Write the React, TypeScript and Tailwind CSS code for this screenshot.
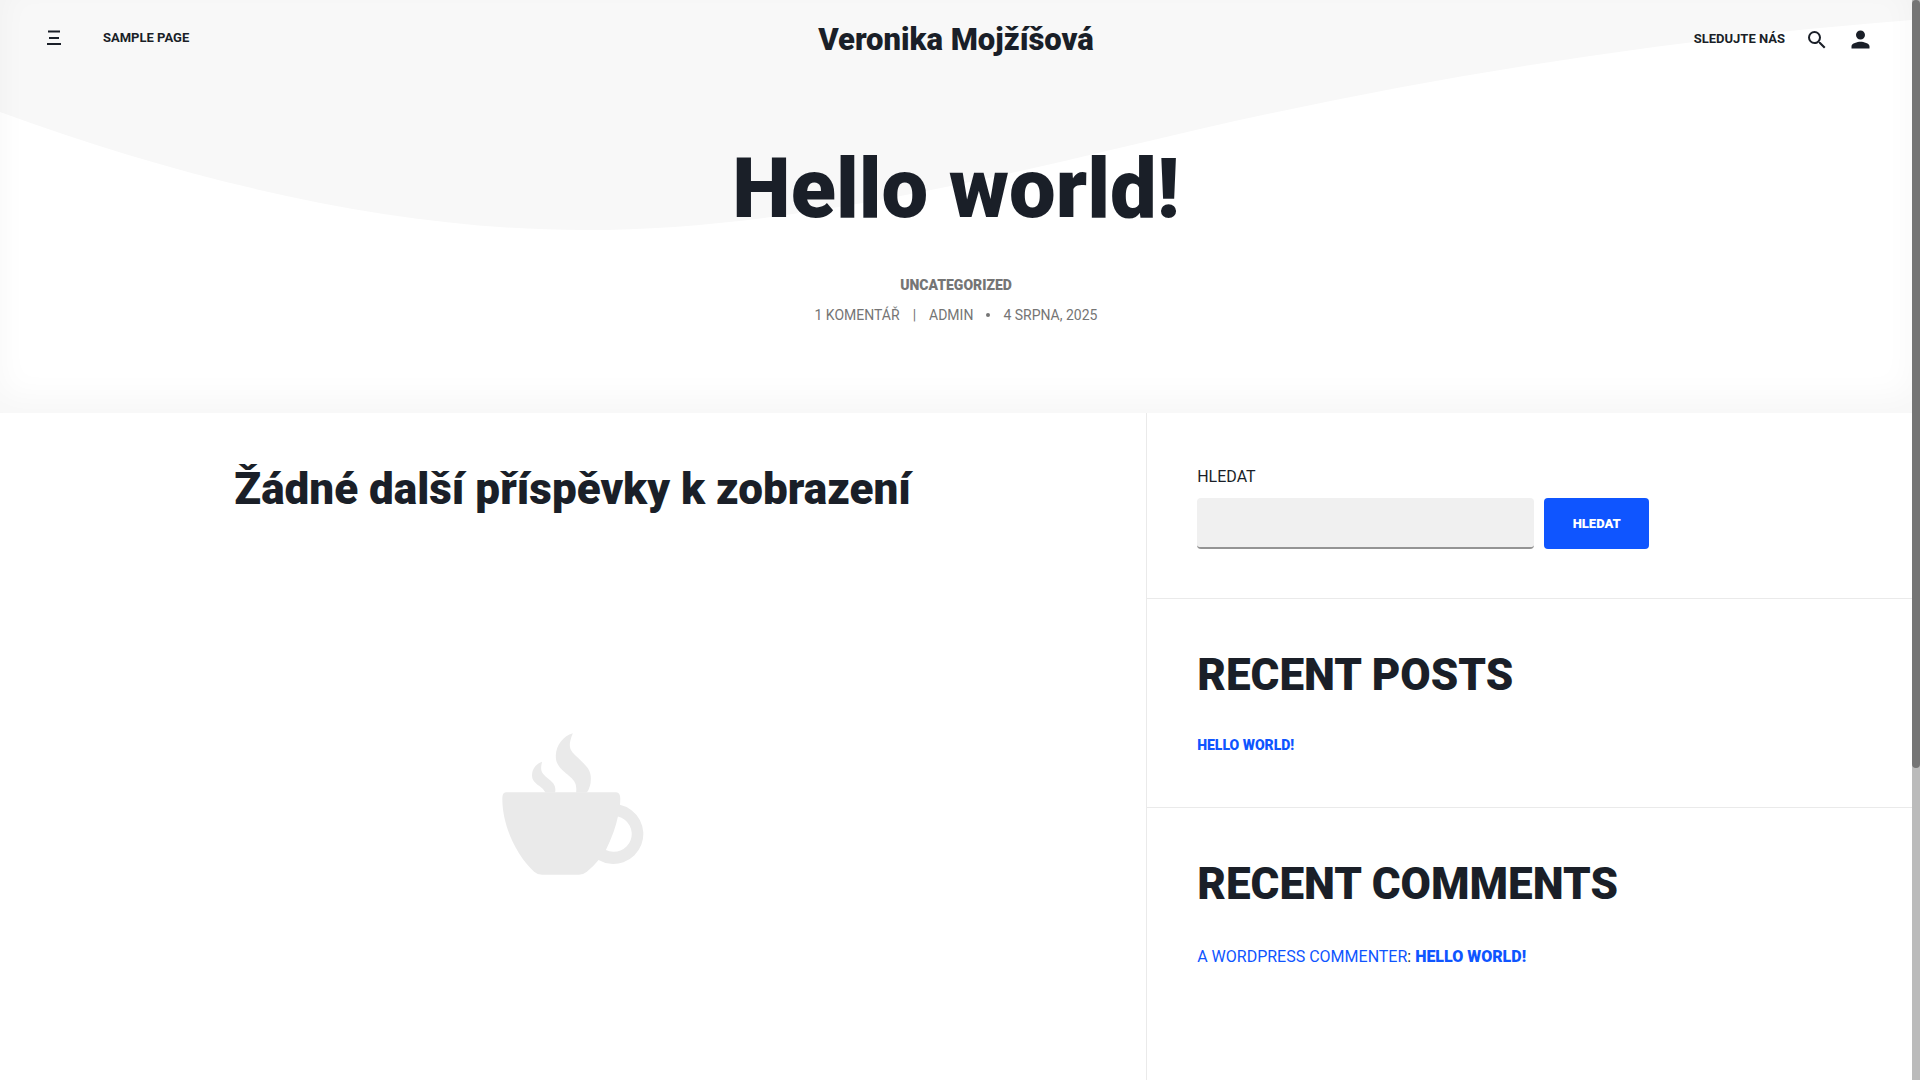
import { useState } from 'react';

interface Entry {
  id: number;
  title: string;
  author?: string;
}

const recentPosts: Entry[] = [{ id: 1, title: 'Hello world!' }];

const recentComments: Entry[] = [
  { id: 1, title: 'Hello world!', author: 'A WordPress Commenter' },
];

function MenuIcon() {
  return (
    <svg width="14" height="15" viewBox="0 0 14 15" fill="currentColor" aria-hidden="true">
      <rect x="1" y="0.5" width="12" height="2" />
      <rect x="2" y="7" width="10" height="2" />
      <rect x="0" y="13" width="14" height="2" />
    </svg>
  );
}

function SearchIcon() {
  return (
    <svg width="24" height="24" viewBox="0 0 24 24" fill="currentColor" aria-hidden="true">
      <path d="M15.5 14h-.79l-.28-.27A6.471 6.471 0 0 0 16 9.5 6.5 6.5 0 1 0 9.5 16c1.61 0 3.09-.59 4.23-1.57l.27.28v.79l5 4.99L20.49 19l-4.99-5zm-6 0C7.01 14 5 11.99 5 9.5S7.01 5 9.5 5 14 7.01 14 9.5 11.99 14 9.5 14z" />
    </svg>
  );
}

function UserIcon() {
  return (
    <svg width="27" height="27" viewBox="0 0 24 24" fill="currentColor" aria-hidden="true">
      <path d="M12 12c2.21 0 4-1.79 4-4s-1.79-4-4-4-4 1.79-4 4 1.79 4 4 4zm0 2c-2.67 0-8 1.34-8 4v2h16v-2c0-2.66-5.33-4-8-4z" />
    </svg>
  );
}

function CupIcon() {
  return (
    <svg width="142" height="142" viewBox="66 69 425 425" fill="#eaeaea" aria-hidden="true">
      <path
        fillRule="evenodd"
        d="M78 246H408Q420 246 420 266Q420 275 419 284A89.5 89.5 0 1 1 355 449Q340 468 320 484Q309 493 296 493H186Q172 493 162 484C105 432 66 340 67 264Q67 246 78 246ZM413 319Q404 364 377 419A53.5 53.5 0 1 0 413 319Z"
      />
      <path d="M278 70C262 110 268 120 290 140C320 168 332 180 332 205Q332 230 320 247H288C290 220 285 212 262 193C236 172 227 160 227 137C228 105 250 78 278 70Z" />
      <path d="M186 155C180 180 183 188 200 202C222 218 228 228 225 247H196Q192 238 178 228C160 214 155 206 156 193C157 175 170 160 186 155Z" />
    </svg>
  );
}

function Wave() {
  return (
    <svg
      className="absolute inset-0 w-full h-full"
      viewBox="0 0 1912 413"
      preserveAspectRatio="none"
      aria-hidden="true"
    >
      <path
        d="M0 0H1912V20C1680 38 1440 74 1200 129C1000 176 790 230 585 230C400 230 200 185 0 112Z"
        fill="#f8f8f8"
      />
    </svg>
  );
}

export default function App() {
  const [search, setSearch] = useState('');

  return (
    <div className="flex min-h-screen bg-white text-[#1a1f28] font-[Roboto,sans-serif]">
      <div className="flex-1 flex flex-col">
        <header className="relative h-[413px]">
          <Wave />
          <div className="absolute inset-0 shadow-[inset_0_-16px_32px_rgba(0,0,0,0.035)]"></div>
          <div className="relative">
            <div className="grid grid-cols-3 items-center h-[78px] px-10">
              <nav className="flex items-center gap-9 pl-[7px] pb-0.5">
                <button type="button" aria-label="Menu" className="pr-1.5 pb-0.5">
                  <MenuIcon />
                </button>
                <a href="#sample" className="text-[13px] font-bold uppercase">Sample Page</a>
              </nav>
              <a href="#home" className="pt-px text-center text-[31px] leading-[40px] font-black whitespace-nowrap">
                Veronika Mojžíšová
              </a>
              <div className="flex items-center justify-end">
                <a href="#social" className="text-[13px] font-bold uppercase mr-5">Sledujte nás</a>
                <button type="button" aria-label="Hledat" className="mr-[18px] mt-0.5">
                  <SearchIcon />
                </button>
                <button type="button" aria-label="Admin" className="mr-[-2px]">
                  <UserIcon />
                </button>
              </div>
            </div>
            <div className="pt-[61px] text-center">
              <h1 className="text-[83px] leading-[100px] font-black">Hello world!</h1>
              <div className="pt-[35px] text-sm leading-[22px] uppercase text-[#757575]">
                <a href="#uncategorized" className="font-black">Uncategorized</a>
                <div className="flex items-center justify-center gap-[13px] pt-2">
                  <a href="#comments">1 komentář</a>
                  <span>|</span>
                  <a href="#admin">Admin</a>
                  <span className="w-1 h-1 rounded-full bg-[#757575]"></span>
                  <time>4 srpna, 2025</time>
                </div>
              </div>
            </div>
          </div>
        </header>

        <div className="flex-1 grid grid-cols-[3fr_2fr]">
          <main className="flex flex-col items-center pt-[51px] pr-0.5">
            <h2 className="text-[44px] leading-[50px] font-black">Žádné další příspěvky k zobrazení</h2>
            <div className="pt-[219px]">
              <CupIcon />
            </div>
          </main>

          <aside className="-ml-px border-l border-[#eaeaea] uppercase">
            <section className="px-[50px] pt-[51px] pb-[49px] border-b border-[#eaeaea]">
              <form onSubmit={(e) => e.preventDefault()}>
                <label htmlFor="search" className="block mb-2 leading-[26px]">Hledat</label>
                <div className="flex gap-2.5">
                  <input
                    id="search"
                    type="search"
                    value={search}
                    onChange={(e) => setSearch(e.target.value)}
                    className="w-[337px] h-[51px] px-4 rounded bg-[#f0f0f0] border-b-2 border-[#949494] outline-none"
                  />
                  <button type="submit" className="w-[105px] rounded bg-[#0f55ff] text-white text-[13px] font-black uppercase">
                    Hledat
                  </button>
                </div>
              </form>
            </section>

            <section className="px-[50px] pt-[51px] pb-[50px] border-b border-[#eaeaea]">
              <h2 className="text-[44px] leading-[50px] font-black">Recent Posts</h2>
              <ul className="pt-[33px] text-sm leading-6 font-black text-[#0f55ff]">
                {recentPosts.map((post) => (
                  <li key={post.id}>
                    <a href="#hello">{post.title}</a>
                  </li>
                ))}
              </ul>
            </section>

            <section className="px-[50px] pt-[51px] pb-[50px]">
              <h2 className="text-[44px] leading-[50px] font-black">Recent Comments</h2>
              <ul className="pt-9 leading-6">
                {recentComments.map((comment) => (
                  <li key={comment.id}>
                    <a href="#author" className="text-[#0f55ff]">{comment.author}</a>:{' '}
                    <a href="#hello" className="font-black text-[#0f55ff]">{comment.title}</a>
                  </li>
                ))}
              </ul>
            </section>
          </aside>
        </div>
      </div>

      <div className="sticky top-0 w-2 h-screen bg-[#bbbbbb]">
        <div className="h-[768px] rounded bg-[#757575]"></div>
      </div>
    </div>
  );
}
